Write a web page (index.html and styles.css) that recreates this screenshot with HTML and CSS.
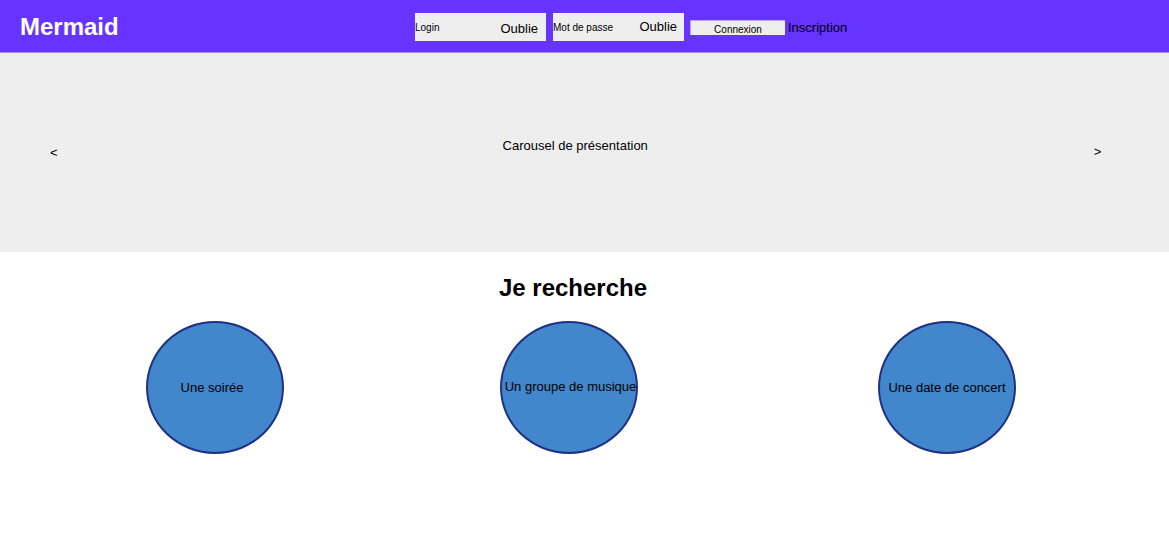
FILE: index.html
```html
<!DOCTYPE html>
<html lang="fr">
<head>
<meta charset="utf-8">
<title>Mermaid</title>
<link rel="stylesheet" href="styles.css">
</head>
<body>
<header class="topbar">
  <div class="brand">Mermaid</div>
  <form class="auth">
    <div class="field"><span class="field-label">Login</span><span class="field-link">Oublie</span></div>
    <div class="field field--pass"><span class="field-label">Mot de passe</span><span class="field-link">Oublie</span></div>
    <button type="button" class="btn">Connexion</button>
    <span class="signup">Inscription</span>
  </form>
</header>
<section class="carousel">
  <span class="arrow arrow--left">&lt;</span>
  <span class="carousel-title">Carousel de présentation</span>
  <span class="arrow arrow--right">&gt;</span>
</section>
<main class="search">
  <h1 class="search-title">Je recherche</h1>
  <div class="choices">
    <div class="choice">Une soirée</div>
    <div class="choice choice--mid">Un groupe de musique</div>
    <div class="choice choice--last">Une date de concert</div>
  </div>
</main>
</body>
</html>
```
FILE: styles.css
```css
* { box-sizing: border-box; }
html, body { margin: 0; padding: 0; background: #fff; }
body { font-family: "Liberation Sans", Arial, sans-serif; color: #000; width: 1169px; height: 553px; overflow: hidden; }

.topbar {
  height: 53px;
  background: #6633ff;
  border-bottom: 1px solid #a68cff;
  display: flex;
  align-items: center;
}
.brand {
  font-size: 24px;
  font-weight: bold;
  color: #fff;
  padding-left: 20px;
  width: 415px;
  margin-top: 2px;
}
.auth { display: flex; align-items: center; margin-top: 2px; }
.field {
  width: 131px;
  height: 28px;
  background: #eeeeee;
  display: flex;
  align-items: center;
  justify-content: space-between;
  padding-right: 8px;
  margin-right: 7px;
}
.field-label { font-size: 10px; }
.field-link { font-size: 13px; padding-top: 2px; }
.field--pass .field-link { padding-top: 0; padding-bottom: 1px; }
.field--pass { margin-right: 6px; padding-right: 7px; }
.btn {
  width: 95px;
  height: 15px;
  background: #eeeeee;
  border: none;
  border-left: 1px solid #b9a6ff;
  border-top: 1px solid #b9a6ff;
  font-family: "Liberation Sans", Arial, sans-serif;
  font-size: 10px;
  padding: 3px 0 0;
  line-height: 12px;
  color: #000;
  margin-top: 0;
}
.signup { font-size: 13px; margin-left: 3px; margin-top: 1px; }

.carousel {
  height: 199px;
  background: #eeeeee;
  display: flex;
  align-items: flex-start;
  padding: 85px 0 0 50px;
  font-size: 13px;
}
.arrow { margin-top: 7px; }
.carousel-title { margin-left: 445px; }
.arrow--right { margin-left: 446px; margin-top: 6px; }

.search { padding-top: 21px; }
.search-title {
  margin: 0 0 18px;
  font-size: 24px;
  font-weight: bold;
  text-align: center;
  width: 1146px;
  line-height: 30px;
}
.choices { display: flex; padding-left: 146px; }
.choice {
  width: 138px;
  height: 133px;
  border-radius: 50%;
  background: #4286cb;
  border: 2px solid #1f3185;
  display: flex;
  align-items: center;
  justify-content: center;
  font-size: 13px;
  text-align: center;
  white-space: nowrap;
  padding-right: 6px;
}
.choice--mid { margin-left: 216px; padding: 0 0 2px 3px; }
.choice--last { margin-left: 240px; padding: 0; }
```
